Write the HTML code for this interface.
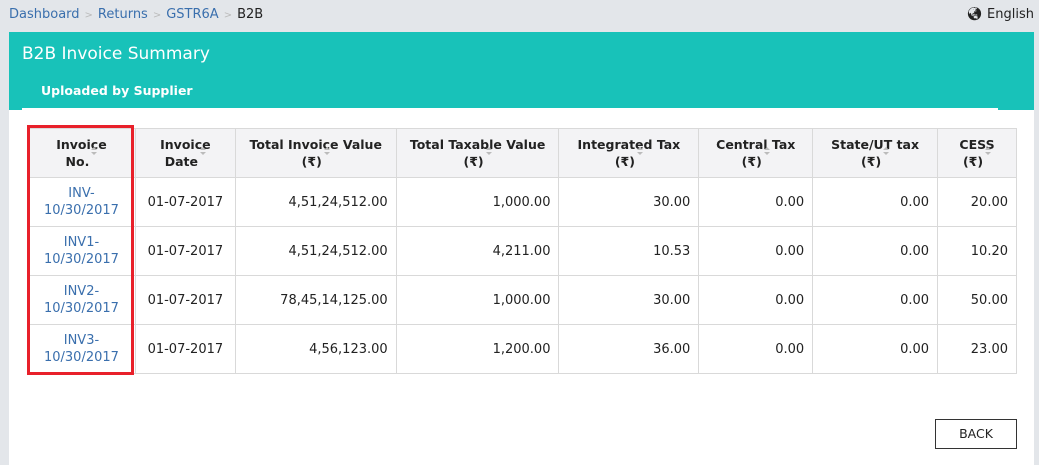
<!DOCTYPE html>
<html><head><meta charset="utf-8"><style>
*{box-sizing:border-box;margin:0;padding:0}
body{width:1039px;height:465px;overflow:hidden;background:#e3e6ea;font-family:"DejaVu Sans","Liberation Sans",sans-serif;font-size:13px;color:#222;position:relative}
.bc{position:absolute;top:7px;left:9px;font-size:13px;color:#3a6fad}
.bc .s{color:#bbb;font-size:10px;margin:0 5px}
.bc b{font-weight:normal;color:#222}
.lang{position:absolute;top:7px;right:5px;font-size:13px;color:#222}
.panel{position:absolute;left:9px;top:32px;width:1025px;height:433px;background:#fff}
.head{height:78px;background:#18c2b9;color:#fff}
.head h1{font-weight:normal;font-size:17px;position:absolute;left:13px;top:12px}
.head .tab{position:absolute;left:32px;top:51px;font-size:12.5px;font-weight:bold}
.uline{position:absolute;left:13px;top:76px;width:976px;height:2px;background:#fff}
table{position:absolute;left:18px;top:96px;border-collapse:collapse;width:990px}
th,td{border:1px solid #d9d9d9;height:49px}
th{background:#f3f3f5;font-weight:bold;text-align:center;line-height:17px;font-size:12.5px;position:relative}
th i{display:inline-block;width:6px;height:9px;vertical-align:top;margin-left:2px;position:relative;top:-6px}
th i:before{content:"";position:absolute;left:0;top:0;border:3px solid transparent;border-bottom-color:#bbb;border-top:0}
th i:after{content:"";position:absolute;left:0;top:5px;border:3px solid transparent;border-top-color:#bbb;border-bottom:0}
td{text-align:right;padding-right:8px}
td.c{text-align:center;padding:0}
td.l{color:#3a6fad;text-align:center;padding:0;line-height:17px}
.red{position:absolute;left:18px;top:93px;width:107px;height:250px;border:3px solid #e8202a}
.back{position:absolute;left:926px;top:387px;width:82px;height:30px;border:1px solid #333;text-align:center;line-height:28px;font-size:12.5px}
</style></head><body>
<div class="bc">Dashboard<span class="s">&gt;</span>Returns<span class="s">&gt;</span>GSTR6A<span class="s">&gt;</span><b>B2B</b></div>
<div class="lang">&#127759;&#xFE0E; English</div>
<div class="panel">
<div class="head"><h1>B2B Invoice Summary</h1><div class="tab">Uploaded by Supplier</div><div class="uline"></div></div>
<table>
<colgroup><col style="width:108px"><col style="width:100px"><col style="width:161px"><col style="width:163px"><col style="width:140px"><col style="width:114px"><col style="width:125px"><col style="width:79px"></colgroup>
<tr><th>Invoice<br>No.<i></i></th><th>Invoice<br>Date<i></i></th><th>Total Invoice Value<br>(₹)<i></i></th><th>Total Taxable Value<br>(₹)<i></i></th><th>Integrated Tax<br>(₹)<i></i></th><th>Central Tax<br>(₹)<i></i></th><th>State/UT tax<br>(₹)<i></i></th><th>CESS<br>(₹)<i></i></th></tr>
<tr><td class="l">INV-<br>10/30/2017</td><td class="c">01-07-2017</td><td>4,51,24,512.00</td><td>1,000.00</td><td>30.00</td><td>0.00</td><td>0.00</td><td>20.00</td></tr>
<tr><td class="l">INV1-<br>10/30/2017</td><td class="c">01-07-2017</td><td>4,51,24,512.00</td><td>4,211.00</td><td>10.53</td><td>0.00</td><td>0.00</td><td>10.20</td></tr>
<tr><td class="l">INV2-<br>10/30/2017</td><td class="c">01-07-2017</td><td>78,45,14,125.00</td><td>1,000.00</td><td>30.00</td><td>0.00</td><td>0.00</td><td>50.00</td></tr>
<tr><td class="l">INV3-<br>10/30/2017</td><td class="c">01-07-2017</td><td>4,56,123.00</td><td>1,200.00</td><td>36.00</td><td>0.00</td><td>0.00</td><td>23.00</td></tr>
</table>
<div class="red"></div>
<div class="back">BACK</div>
</div>
</body></html>
